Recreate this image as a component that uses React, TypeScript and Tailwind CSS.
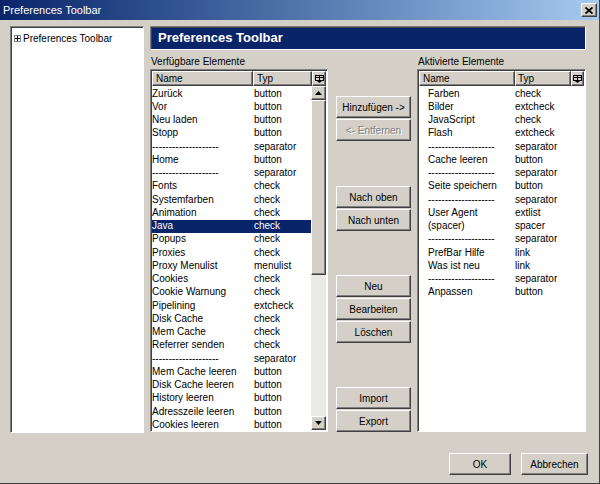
import React from "react";

const font = { fontFamily: '"Liberation Sans", Arial, sans-serif' };
const SEP = "--------------------";

const leftItems: [string, string][] = [
  ["Zurück", "button"],
  ["Vor", "button"],
  ["Neu laden", "button"],
  ["Stopp", "button"],
  [SEP, "separator"],
  ["Home", "button"],
  [SEP, "separator"],
  ["Fonts", "check"],
  ["Systemfarben", "check"],
  ["Animation", "check"],
  ["Java", "check"],
  ["Popups", "check"],
  ["Proxies", "check"],
  ["Proxy Menulist", "menulist"],
  ["Cookies", "check"],
  ["Cookie Warnung", "check"],
  ["Pipelining", "extcheck"],
  ["Disk Cache", "check"],
  ["Mem Cache", "check"],
  ["Referrer senden", "check"],
  [SEP, "separator"],
  ["Mem Cache leeren", "button"],
  ["Disk Cache leeren", "button"],
  ["History leeren", "button"],
  ["Adresszeile leeren", "button"],
  ["Cookies leeren", "button"],
];

const rightItems: [string, string][] = [
  ["Farben", "check"],
  ["Bilder", "extcheck"],
  ["JavaScript", "check"],
  ["Flash", "extcheck"],
  [SEP, "separator"],
  ["Cache leeren", "button"],
  [SEP, "separator"],
  ["Seite speichern", "button"],
  [SEP, "separator"],
  ["User Agent", "extlist"],
  ["(spacer)", "spacer"],
  [SEP, "separator"],
  ["PrefBar Hilfe", "link"],
  ["Was ist neu", "link"],
  [SEP, "separator"],
  ["Anpassen", "button"],
];

const raised =
  "bg-[#d4d0c8] border border-t-white border-l-white border-r-[#404040] border-b-[#404040] shadow-[inset_-1px_-1px_0_#808080]";
const sunken =
  "border border-t-[#808080] border-l-[#808080] border-r-white border-b-white shadow-[inset_1px_1px_0_#404040]";

function ColIcon() {
  return (
    <svg width="9" height="8" viewBox="0 0 9 8">
      <rect x="0.5" y="0.5" width="8" height="5" fill="none" stroke="#000" />
      <line x1="4.5" y1="0.5" x2="4.5" y2="5.5" stroke="#000" />
      <line x1="0.5" y1="2.5" x2="8.5" y2="2.5" stroke="#000" />
      <path d="M2 6h5l-2.5 2z" fill="#000" />
    </svg>
  );
}

function Btn({ children, disabled, className = "" }: { children: React.ReactNode; disabled?: boolean; className?: string }) {
  return (
    <div
      className={`${raised} h-[22px] flex items-center justify-center text-[10px] ${
        disabled ? "text-[#808080] [text-shadow:1px_1px_0_#fff]" : "text-black"
      } ${className}`}
    >
      {children}
    </div>
  );
}

function HeaderCell({ children, className = "" }: { children?: React.ReactNode; className?: string }) {
  return (
    <div className={`${raised} h-[15px] flex items-center text-[10px] leading-none ${className}`}>{children}</div>
  );
}

function Arrow({ up }: { up?: boolean }) {
  return (
    <div className={`${raised} h-[14px] w-full flex items-center justify-center`}>
      <svg width="7" height="4" viewBox="0 0 7 4">
        {up ? <path d="M0 4h7L3.5 0z" fill="#000" /> : <path d="M0 0h7L3.5 4z" fill="#000" />}
      </svg>
    </div>
  );
}

export default function App() {
  return (
    <div
      style={font}
      className="w-[600px] h-[484px] bg-[#d4d0c8] flex flex-col text-black border-r border-b border-r-[#404040] border-b-[#404040] overflow-hidden"
    >
      {/* Title bar */}
      <div className="h-[20px] shrink-0 bg-gradient-to-r from-[#0a246a] to-[#a6caf0] flex items-center pl-[3px] pr-[2px]">
        <span className="text-white text-[11px] flex-1">Preferences Toolbar</span>
        <div className={`${raised} w-[16px] h-[14px] flex items-center justify-center`}>
          <svg width="8" height="7" viewBox="0 0 8 7">
            <path d="M0.5 0.5L7.5 6.5M7.5 0.5L0.5 6.5" stroke="#000" strokeWidth="1.8" />
          </svg>
        </div>
      </div>

      {/* Body */}
      <div className="flex pl-[10px] pt-[6px] gap-[6px]">
        {/* tree */}
        <div className={`${sunken} bg-white w-[134px] h-[407px] pt-[4px] pl-[3px]`}>
          <div className="flex items-center gap-[2px] text-[10px]">
            <div className="w-[7px] h-[7px] border border-[#808080] bg-white flex items-center justify-center">
              <svg width="5" height="5" viewBox="0 0 5 5">
                <path d="M0 2.5h5M2.5 0v5" stroke="#000" strokeWidth="1" />
              </svg>
            </div>
            <span>Preferences Toolbar</span>
          </div>
        </div>

        {/* main */}
        <div className="w-[436px] flex flex-col">
          <div className={`${sunken} h-[24px] bg-[#0a246a] flex items-center pl-[7px]`}>
            <span className="text-white text-[13px] font-bold">Preferences Toolbar</span>
          </div>

          <div className="flex mt-[5px]">
            {/* left list */}
            <div className="flex flex-col w-[178px]">
              <div className="h-[14px] text-[10px] pl-[1px] leading-[14px]">Verfügbare Elemente</div>
              <div className={`${sunken} bg-white h-[363px] p-[1px] flex flex-col`}>
                <div className="flex">
                  <HeaderCell className="w-[101px] pl-[3px]">Name</HeaderCell>
                  <HeaderCell className="w-[59px] pl-[3px]">Typ</HeaderCell>
                  <HeaderCell className="flex-1 justify-center">
                    <ColIcon />
                  </HeaderCell>
                </div>
                <div className="flex flex-1 overflow-hidden">
                  <div className="flex-1 flex flex-col overflow-hidden pt-[1px]">
                    {leftItems.map(([n, t], i) => (
                      <div
                        key={i}
                        className={`flex h-[13.25px] shrink-0 items-center text-[10px] leading-none ${
                          n === "Java" ? "bg-[#0a246a] text-white" : ""
                        }`}
                      >
                        <div className="w-[101px] whitespace-nowrap overflow-hidden">{n}</div>
                        <div className="flex-1 pl-[1px] whitespace-nowrap">{t}</div>
                      </div>
                    ))}
                  </div>
                  <div className="w-[15px] flex flex-col bg-[#ebe9e5]">
                    <Arrow up />
                    <div className="flex-1 flex flex-col">
                      <div className={`${raised} h-[175px] w-full`} />
                    </div>
                    <Arrow />
                  </div>
                </div>
              </div>
            </div>

            {/* middle buttons */}
            <div className="flex flex-col w-[89px] pl-[8px] pr-[6px] pt-[41px]">
              <Btn>Hinzufügen -&gt;</Btn>
              <Btn disabled className="mt-[1px]">
                &lt;- Entfernen
              </Btn>
              <Btn className="mt-[45px]">Nach oben</Btn>
              <Btn className="mt-[1px]">Nach unten</Btn>
              <Btn className="mt-[44px]">Neu</Btn>
              <Btn className="mt-[1px]">Bearbeiten</Btn>
              <Btn className="mt-[1px]">Löschen</Btn>
              <Btn className="mt-[44px]">Import</Btn>
              <Btn className="mt-[1px]">Export</Btn>
            </div>

            {/* right list */}
            <div className="flex flex-col w-[169px]">
              <div className="h-[14px] text-[10px] pl-[1px] leading-[14px]">Aktivierte Elemente</div>
              <div className={`${sunken} bg-white h-[363px] p-[1px] flex flex-col`}>
                <div className="flex">
                  <HeaderCell className="w-[96px] pl-[3px]">Name</HeaderCell>
                  <HeaderCell className="w-[56px] pl-[2px]">Typ</HeaderCell>
                  <HeaderCell className="flex-1 justify-center">
                    <ColIcon />
                  </HeaderCell>
                </div>
                <div className="flex flex-col pt-[1px]">
                  {rightItems.map(([n, t], i) => (
                    <div key={i} className="flex h-[13.25px] shrink-0 items-center text-[10px] leading-none">
                      <div className="w-[96px] pl-[9px] whitespace-nowrap overflow-hidden">{n}</div>
                      <div className="flex-1 whitespace-nowrap">{t}</div>
                    </div>
                  ))}
                </div>
              </div>
            </div>
          </div>
        </div>
      </div>

      {/* bottom buttons */}
      <div className="flex justify-end gap-[10px] pr-[11px] mt-[20px]">
        <Btn className="w-[62px]">OK</Btn>
        <Btn className="w-[67px]">Abbrechen</Btn>
      </div>
    </div>
  );
}
